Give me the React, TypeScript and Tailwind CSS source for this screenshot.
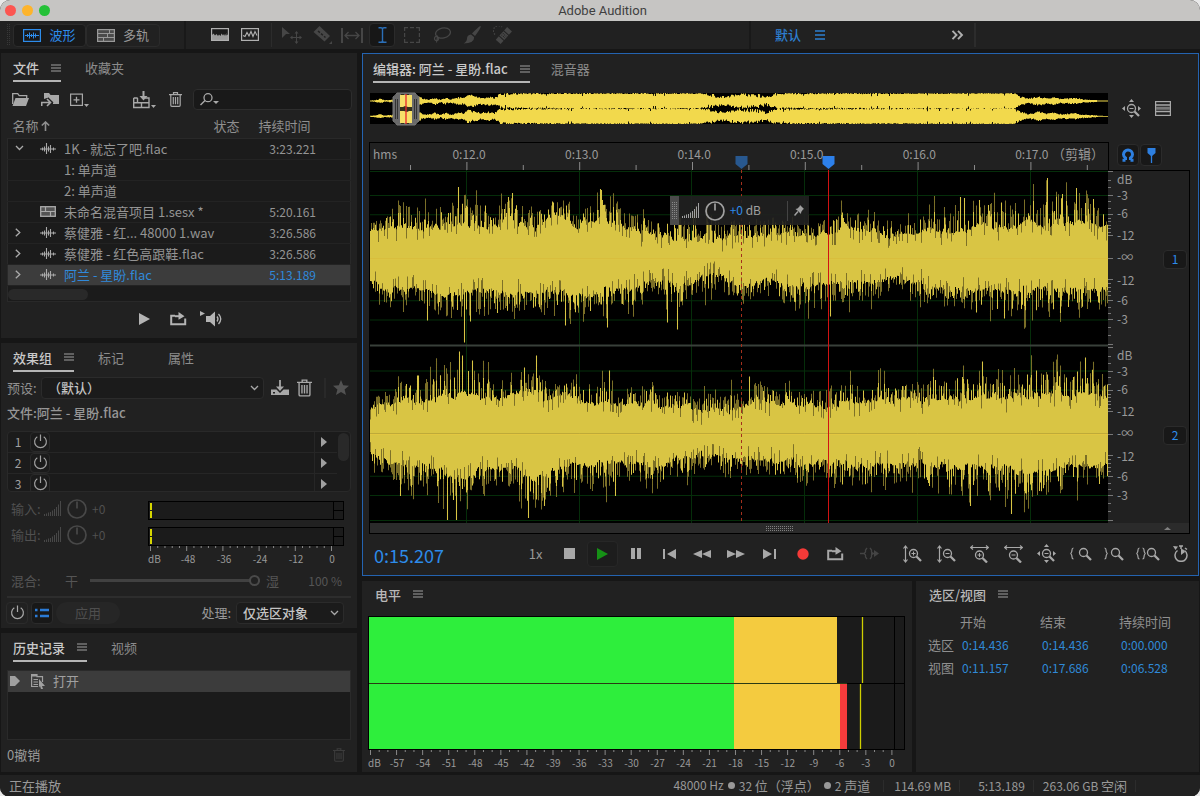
import type { ReactNode } from "react";
import clsx from "clsx";

/* ---------- waveform data ---------- */

type Point = [x: number, base: number, peak: number];
type Spike = [x: number, height: number];

function seeded(seed: number) {
  let a = seed;
  return () => {
    a = (a + 0x6d2b79f5) | 0;
    let t = Math.imul(a ^ (a >>> 15), 1 | a);
    t = (t + Math.imul(t ^ (t >>> 7), 61 | t)) ^ t;
    return ((t ^ (t >>> 14)) >>> 0) / 4294967296;
  };
}

function envelope(points: Point[], x: number): [number, number] {
  for (let i = 1; i < points.length; i++) {
    const a = points[i - 1];
    const b = points[i];
    if (x <= b[0]) {
      const t = (x - a[0]) / (b[0] - a[0]);
      return [a[1] + (b[1] - a[1]) * t, a[2] + (b[2] - a[2]) * t];
    }
  }
  const last = points[points.length - 1];
  return [last[1], last[2]];
}

const WAVE_WIDTH = 738;

function side(center: number, dir: 1 | -1, points: Point[], spikes: Spike[], seed: number) {
  const rnd = seeded(seed);
  let solid = "";
  let dim = "";
  let drift = 0.5;
  for (let x = 0; x < WAVE_WIDTH; x++) {
    const [base, peak] = envelope(points, x);
    const span = peak - base;
    drift = drift * 0.7 + rnd() * 0.3;
    let h = base - 9 + drift * 18 + (rnd() > 0.66 ? rnd() * span * 0.85 : 0);
    let faint = 0;
    if (rnd() < 0.36) faint = h + 4 + rnd() * span * 0.7;
    if (rnd() < 0.2) {
      faint = Math.max(faint, h);
      h -= 5 + rnd() * 8;
    }
    for (const [sx, sh] of spikes) if (sx === x) h = sh;
    const px = x + 0.5;
    solid += `M${px} ${center}V${(center + dir * h).toFixed(1)}`;
    if (faint > h) dim += `M${px} ${(center + dir * h).toFixed(1)}V${(center + dir * faint).toFixed(1)}`;
  }
  return { solid, dim };
}

const waves = [
  side(88, -1, [[0, 27, 32], [20, 30, 48], [35, 33, 62], [60, 30, 50], [92, 37, 72], [120, 32, 56], [140, 38, 62], [165, 30, 45], [185, 42, 58], [205, 34, 50], [230, 40, 62], [250, 30, 46], [275, 28, 40], [290, 22, 42], [320, 20, 45], [350, 20, 40], [400, 24, 40], [440, 24, 34], [458, 24, 40], [475, 30, 50], [500, 27, 46], [530, 22, 30], [550, 30, 45], [580, 26, 60], [600, 30, 62], [640, 32, 60], [665, 35, 64], [690, 34, 68], [720, 35, 68], [738, 33, 50]], [[88, 71], [142, 65], [230, 69], [231, 68], [590, 61], [594, 60], [677, 80], [706, 70]], 11),
  side(88, 1, [[0, 25, 32], [20, 32, 48], [45, 30, 40], [65, 36, 60], [95, 35, 60], [110, 30, 60], [150, 35, 50], [190, 34, 55], [215, 35, 55], [250, 33, 50], [268, 30, 50], [290, 22, 36], [320, 28, 50], [345, 16, 35], [375, 28, 38], [400, 22, 40], [430, 28, 50], [460, 24, 45], [500, 24, 40], [530, 20, 32], [560, 28, 45], [600, 31, 54], [650, 32, 58], [700, 30, 58], [738, 30, 45]], [[57, 62], [94, 84], [100, 63], [195, 67], [237, 69], [297, 64], [307, 71], [460, 58], [634, 60]], 23),
  side(263, -1, [[0, 24, 30], [25, 32, 50], [48, 32, 55], [75, 36, 65], [95, 42, 78], [105, 36, 66], [125, 34, 50], [150, 40, 58], [170, 42, 66], [177, 30, 45], [195, 42, 58], [215, 30, 45], [240, 32, 60], [260, 30, 50], [290, 28, 45], [330, 24, 40], [360, 24, 42], [385, 35, 52], [420, 30, 44], [458, 30, 48], [500, 33, 52], [540, 35, 54], [580, 35, 62], [640, 37, 62], [680, 39, 68], [720, 40, 70], [738, 38, 58]], [[47, 58], [48, 58], [89, 82], [92, 78], [102, 73], [154, 66], [166, 78], [239, 63], [379, 57], [612, 72], [715, 76]], 37),
  side(263, 1, [[0, 20, 28], [20, 30, 50], [45, 33, 62], [60, 30, 50], [80, 42, 80], [95, 45, 70], [115, 34, 60], [145, 34, 50], [160, 45, 80], [180, 38, 64], [200, 30, 50], [240, 28, 56], [265, 30, 50], [290, 28, 45], [330, 20, 40], [365, 24, 40], [400, 28, 44], [450, 28, 48], [500, 33, 56], [550, 31, 50], [600, 33, 58], [660, 36, 64], [700, 33, 60], [738, 33, 52]], [[30, 62], [77, 86], [86, 86], [158, 84], [174, 72], [245, 62], [600, 72], [641, 80]], 53),
];

const overviewPoints: Point[] = [
  [0, 0.5, 0.5], [5, 0.6, 1], [10, 1.5, 2.5], [14, 0.5, 1], [22, 0.8, 1.5], [26, 2, 4], [48, 4, 6], [52, 1.5, 3], [58, 1, 2], [65, 2, 4], [70, 0.8, 1.5],
  [75, 2, 4], [80, 1, 2], [88, 2.5, 4], [94, 2, 4], [97, 5, 7], [104, 4, 6], [110, 2, 4], [118, 3, 5], [124, 2, 4], [130, 5, 8],
  [140, 6, 8], [170, 6.5, 8], [200, 7, 8], [325, 7, 8], [338, 5, 8], [348, 2.5, 6], [354, 2, 5], [368, 5, 8], [378, 4, 8], [390, 3, 7], [396, 2, 5], [405, 5.5, 8], [420, 6.5, 8], [640, 7.3, 8],
  [645, 6.5, 7.5], [650, 3, 5], [658, 1.5, 2.5], [668, 3, 5], [676, 2, 3], [683, 3, 4], [690, 1.5, 2.5], [706, 2, 3.5], [712, 1, 2], [726, 0.7, 1.2], [728, 0.5, 0.5], [738, 0.4, 0.4],
];

function overviewPath(center: number, seed: number) {
  const rnd = seeded(seed);
  let d = "";
  for (let x = 0; x < WAVE_WIDTH; x++) {
    const [base, peak] = envelope(overviewPoints, x);
    const up = base + rnd() * (peak - base);
    const down = base + rnd() * (peak - base);
    const dip = rnd() < 0.03 && base > 4 ? 2 : 0;
    d += `M${x + 0.5} ${(center - up + dip).toFixed(1)}V${(center + down - dip).toFixed(1)}`;
  }
  return d;
}

const overview = overviewPath(8, 5) + overviewPath(23.3, 9);

/* ---------- icons ---------- */

type IconProps = { w: number; h: number; children: ReactNode; className?: string };

function Icon({ w, h, children, className }: IconProps) {
  return (
    <svg width={w} height={h} viewBox={`0 0 ${w} ${h}`} fill="none" stroke="currentColor" className={clsx("shrink-0", className)} aria-hidden="true">
      {children}
    </svg>
  );
}

const Menu = ({ className }: { className?: string }) => (
  <Icon w={10} h={9} className={className}><path d="M0 1h10M0 4h10M0 7h10" /></Icon>
);

const Chevron = ({ className }: { className?: string }) => (
  <Icon w={9} h={6} className={className}><path d="M1 1l3.500 3.500L8 1" strokeWidth="1.300" /></Icon>
);

const WaveGlyph = () => (
  <Icon w={16} h={12}><path d="M0 6h16M2.500 4.500v3M4.500 3.500v5M6.500 0v11M8.500 3.500v5M10.500 2v8M13.500 4.500v3" strokeWidth="1.100" /></Icon>
);

const SessionGlyph = () => (
  <Icon w={16} h={11}><rect x=".7" y=".7" width="14.600" height="9.600" fill="#555" strokeWidth="1.300" /><path d="M1 5.500h14M5.500 1v4.500M10.500 5.500V10" strokeWidth="1.200" /></Icon>
);

const Trash = ({ w = 13, h = 15, className }: { w?: number; h?: number; className?: string }) => (
  <svg width={w} height={h} viewBox="0 0 13 15" fill="none" stroke="currentColor" className={clsx("shrink-0", className)} aria-hidden="true">
    <path d="M0 2.600h13M4.500 2.500V.7h4v1.800M1.800 3v10.300q0 1 1 1h7.400q1 0 1-1V3M4.300 5v7.200M6.500 5v7.200M8.700 5v7.200" strokeWidth="1.200" />
  </svg>
);

const Power = ({ className }: { className?: string }) => (
  <Icon w={15} h={15} className={className}><path d="M4.300 2.700a5.900 5.900 0 1 0 6.400 0M7.500 .5v6.500" strokeWidth="1.200" /></Icon>
);

const Loop = () => (
  <Icon w={17} h={14}><path d="M5 3.800H1.200v8.400h14V6.500" strokeWidth="2" /><path d="M5 4.200h5" strokeWidth="2" /><path d="M8.500 0l6 4.200-6 3.600z" fill="currentColor" stroke="none" /></Icon>
);

const Bars = ({ className }: { className?: string }) => (
  <Icon w={17} h={15} className={className}><path d="M.5 13v2M2.500 12.500V15M4.500 11.500V15M6.500 11V15M8.500 9.500V15M10.500 8V15M12.500 6V15M14.500 3.500V15M16.500 0V15" /></Icon>
);

const Knob = ({ className }: { className?: string }) => (
  <Icon w={20} h={20} className={className}><circle cx="10" cy="10" r="9" strokeWidth="1.700" /><path d="M10 2.500V9.500" strokeWidth="1.700" /></Icon>
);

const Lens = ({ x, y, sign }: { x: number; y: number; sign?: "+" | "-" }) => (
  <g transform={`translate(${x} ${y})`}>
    <circle cx="4.500" cy="4.500" r="4" strokeWidth="1.300" />
    <path d="M7.500 7.500L12 12" strokeWidth="2.300" />
    {sign && <path d={sign === "+" ? "M2.500 4.500h4M4.500 2.500v4" : "M2.500 4.500h4"} />}
  </g>
);

const ZoomV = ({ sign }: { sign: "+" | "-" }) => (
  <Icon w={19} h={18}><path d="M2.500 2v14M.5 3.500l2-2.500 2 2.500M.5 14.500l2 2.500 2-2.500" strokeWidth="1.200" /><Lens x={6} y={4} sign={sign} /></Icon>
);

const ZoomH = ({ sign }: { sign: "+" | "-" }) => (
  <Icon w={19} h={18}><path d="M1 2.500h17M3 .5l-2.500 2 2.500 2M16 .5l2.500 2-2.500 2" strokeWidth="1.200" /><Lens x={5} y={5.5} sign={sign} /></Icon>
);

const ZoomFull = () => (
  <Icon w={19} h={19}>
    <Lens x={5} y={5} sign="-" />
    <path d="M9.500 0l2.500 3H7zM9.500 19l2.500-3H7zM0 9.500L3 7v5zM19 9.500L16 7v5z" fill="currentColor" stroke="none" />
  </Icon>
);

/* ---------- shared pieces ---------- */

type Tab = { label: string; active?: boolean; spaced?: boolean };

function Tabs({ tabs, gap, name }: { tabs: Tab[]; gap: string; name: string }) {
  return (
    <div role="tablist" aria-label={name} className={clsx("flex h-[29px] items-stretch", gap)}>
      {tabs.map((t) => (
        <button
          key={t.label}
          role="tab"
          aria-selected={!!t.active}
          className={clsx(
            "flex items-center gap-3 border-b-2 pt-[3px] whitespace-nowrap",
            t.active ? "border-[#b5b5b5] font-medium text-[#c9c9c9]" : "border-transparent text-[#8c8c8c]",
            t.spaced && "ml-5",
          )}
        >
          {t.label}
          {t.active && <Menu className="text-[#a0a0a0]" />}
        </button>
      ))}
    </div>
  );
}

const toolCell = "flex h-[22px] w-[30px] items-center justify-center";

function TopBar() {
  return (
    <div className="flex h-7 items-center overflow-hidden bg-[#212121] text-[#464646]">
      <Icon w={4} h={22} className="ml-[6px] text-[#383838]"><path d="M1.500 0v22M3.500 0v22" strokeDasharray="1 1" /></Icon>
      <div className="ml-[3px] flex">
        <button className="flex h-[23px] w-[73px] items-center justify-center gap-2 rounded-sm border border-[#2b2b2b] bg-[#191919] text-[#2d8ceb]">
          <Icon w={18} h={13}><rect x=".6" y=".6" width="16.800" height="11.800" strokeWidth="1.200" /><path d="M2 6.500h14M4.500 5v3M6.500 3.500v6M8.500 5v3M10.500 3.500v6M12.500 4.500v4" /></Icon>
          波形
        </button>
        <button className="flex h-[23px] w-[74px] items-center justify-center gap-2 rounded-sm border border-[#2b2b2b] text-[#999]">
          <Icon w={18} h={13}><rect x=".6" y=".6" width="16.800" height="11.800" fill="#4b4b4b" strokeWidth="1.200" /><path d="M1 4.500h16M1 8.500h16M6.500 8.500V12M12.500 1v3.500M10.500 4.500v4" /></Icon>
          多轨
        </button>
      </div>
      <div className="ml-6 h-7 w-[2px] bg-[#191919]" />
      <div className="ml-[25px] flex gap-3 pb-px text-[#b0b0b0]">
        <button aria-label="频谱频率"><Icon w={18} h={13}><rect x=".6" y=".6" width="16.800" height="11.800" fill="#9c9c9c" strokeWidth="1.200" /><path d="M1.200 1.200h15.600v5.300l-1.500 1V5l-1.300 3-1-2-1 1.500-1.500-2-1 2.500L8 6.500 7 8 5.500 6 4 7.500 2.500 5.500 1.200 7z" fill="#1c1c1c" stroke="none" /></Icon></button>
        <button aria-label="频谱音调"><Icon w={18} h={13}><rect x=".6" y=".6" width="16.800" height="11.800" strokeWidth="1.200" /><path d="M2 7.500l2 1 2-4 2 3.500 2-4.500 2 5 2-5 2 4" strokeWidth="1.100" /></Icon></button>
      </div>
      <div className="ml-3 h-6 w-px bg-[#2c2c2c]" />
      <div className="ml-[5px] flex">
        <button aria-label="移动" className={toolCell}><Icon w={20} h={17}><path d="M0 0l8 7H4L0 11z" fill="currentColor" stroke="none" /><path d="M10 10.500h9M14.500 6v9" /><path d="M14.500 4l2 2.500h-4zM14.500 17l2-2.500h-4zM8 10.500l2.500-2v4zM20 10.500l-2.500-2v4z" fill="currentColor" stroke="none" /></Icon></button>
        <button aria-label="切断" className={toolCell}><Icon w={19} h={18}><path d="M.5 6L6.500 0 17 10l-5.500 5.500z" fill="currentColor" stroke="none" /><path d="M5 5l7.500 6.500" stroke="#212121" strokeWidth="1.500" strokeDasharray="2.500 1.500" /><path d="M19 15v3h-3z" fill="currentColor" stroke="none" /></Icon></button>
        <button aria-label="滑动" className={toolCell}><Icon w={22} h={15}><path d="M1 0v15M21 0v15" strokeWidth="2" /><path d="M4 7.500h14M7.500 4L4 7.500 7.500 11M14.500 4L18 7.500 14.500 11" strokeWidth="1.300" /></Icon></button>
        <button aria-label="时间选择" className="mx-[2px] -my-px flex h-[24px] w-[26px] items-center justify-center rounded-sm border border-[#2b2b2b] bg-[#171717] text-[#2b6fb8]"><Icon w={9} h={16}><path d="M.5 .7h2.500q1.500 0 1.500 1.500v11.600q0 1.500-1.500 1.500H.5M8.500 .7H6q-1.500 0-1.500 1.500M8.500 15.300H6q-1.500 0-1.500-1.500" strokeWidth="1.400" /></Icon></button>
        <button aria-label="框选" className={toolCell}><Icon w={16} h={16}><path d="M.6 4V.6H4M12 .6h3.400V4M15.400 12v3.400H12M4 15.400H.6V12M6 .6h4M6 15.400h4M.6 6v4M15.400 6v4" strokeWidth="1.200" /></Icon></button>
        <button aria-label="套索" className={toolCell}><Icon w={18} h={16}><ellipse cx="10" cy="6" rx="7.500" ry="5" transform="rotate(-12 10 6)" strokeWidth="1.300" /><path d="M4.500 9.500q-3-.5-3 2t3 2q2-1 0-4l-1 6" strokeWidth="1.200" /></Icon></button>
        <button aria-label="画笔" className={toolCell}><Icon w={18} h={18}><path d="M17.500 0Q19 1 12 10l-3-2.500Q15 1 17.500 0zM8 8.500L11 11q1 6-10.500 6.500Q4 15.500 4 12.500 4 9 8 8.500z" fill="currentColor" stroke="none" /></Icon></button>
        <button aria-label="修复" className={toolCell}><Icon w={19} h={18}><g transform="rotate(-48 11 9)"><rect x="2" y="6" width="4.500" height="6.500" fill="currentColor" stroke="none" /><rect x="7.500" y="6" width="6" height="6.500" fill="currentColor" stroke="none" /><rect x="14.500" y="6" width="4.500" height="6.500" fill="currentColor" stroke="none" /><path d="M9.500 7v4.500M11.500 7v4.500" stroke="#212121" strokeDasharray="1 1" /></g><path d="M2 8.500A5 5 0 0 1 9 1" strokeDasharray="1.500 1.500" strokeWidth="1.200" /></Icon></button>
      </div>
      <div className="flex-1" />
      <div className="h-7 w-[2px] bg-[#191919]" />
      <button className="ml-6 flex w-[150px] items-center gap-[14px] font-medium text-[#2d7fd0]">
        默认
        <Icon w={10} h={10}><path d="M0 1h10M0 5h10M0 9h10" strokeWidth="1.300" /></Icon>
      </button>
      <button aria-label="更多工作区" className="ml-[26px] text-[#b0b0b0]"><Icon w={13} h={10}><path d="M1.500 .8L5.500 5l-4 4.200M7 .8L11 5 7 9.200" strokeWidth="1.900" /></Icon></button>
      <div className="ml-[10px] h-6 w-[2px] bg-[#2c2c2c]" />
      <div className="w-56" />
    </div>
  );
}

/* ---------- files ---------- */

const files = [
  { name: "1K - 就忘了吧.flac", time: "3:23.221", state: "open", kind: "wave" },
  { name: "1: 单声道", time: "", state: "", kind: "" },
  { name: "2: 单声道", time: "", state: "", kind: "" },
  { name: "未命名混音项目 1.sesx *", time: "5:20.161", state: "", kind: "session" },
  { name: "蔡健雅 - 红... 48000 1.wav", time: "3:26.586", state: "closed", kind: "wave" },
  { name: "蔡健雅 - 红色高跟鞋.flac", time: "3:26.586", state: "closed", kind: "wave" },
  { name: "阿兰 - 星盼.flac", time: "5:13.189", state: "closed", kind: "wave", selected: true },
];

function FilesPanel() {
  return (
    <section className="bg-[#212121]">
      <Tabs name="文件面板" gap="gap-6 pl-3" tabs={[{ label: "文件", active: true }, { label: "收藏夹" }]} />
      <div className="mt-[7px] flex items-center pr-[5px] pl-[11px] text-[#a8a8a8]">
        <button aria-label="打开文件"><Icon w={17} h={13}><path d="M.7 11V.7h5l1.500 2h7.500V5" strokeWidth="1.300" /><path d="M3.500 5H17l-3 8H.5z" fill="currentColor" stroke="none" /></Icon></button>
        <button aria-label="导入文件" className="ml-3"><Icon w={19} h={15}><path d="M3 7V1h5l1.500 2H18v9h-6V6H6z" fill="currentColor" stroke="none" /><path d="M5 5h8v6" fill="currentColor" stroke="none" /><path d="M.7 14V10.500H9M6 6.500l4 4-4 4" stroke="#212121" strokeWidth="3.500" /><path d="M.7 14v-3.500H9M6 7l3.500 3.500L6 14" strokeWidth="1.600" /></Icon></button>
        <button aria-label="新建文件" className="ml-[10px]"><Icon w={20} h={14}><rect x=".6" y="1.100" width="11.800" height="11.300" strokeWidth="1.200" /><path d="M3.500 6.800h6M6.500 3.800v6" strokeWidth="1.300" /><path d="M14 11h5l-2.500 3z" fill="currentColor" stroke="none" /></Icon></button>
        <button aria-label="插入到多轨混音" className="ml-[43px]"><Icon w={23} h={18}><path d="M.7 7h4M12 7h4v9.500H.7V7M.7 11.700H16M8.500 11.700v5M4.500 7v4" strokeWidth="1.400" /><path d="M10.500 0v6" strokeWidth="2" /><path d="M6.500 5h8l-4 4.500z" fill="currentColor" stroke="none" /><path d="M18 14h5l-2.500 3z" fill="currentColor" stroke="none" /></Icon></button>
        <button aria-label="删除文件" className="ml-[13px]"><Trash /></button>
        <label className="ml-[11px] flex h-[21px] min-w-0 flex-1 items-center rounded-sm border border-[#2d2d2d] bg-[#191919] pl-[6px]">
          <Icon w={19} h={13}><circle cx="8" cy="4.700" r="4" strokeWidth="1.300" /><path d="M5 7.500L.5 12" strokeWidth="1.500" /><path d="M13 8h6l-3 3z" fill="currentColor" stroke="none" /></Icon>
          <input aria-label="搜索文件" className="w-full min-w-0 bg-transparent px-1 outline-none" />
        </label>
      </div>
      <table className="mx-[6px] mt-[5px] w-[344px] table-fixed border-collapse text-left">
        <thead className="text-[#8f8f8f]">
          <tr className="h-[23px]">
            <th className="w-[200px] pl-[5px] font-normal">
              <span className="flex items-center gap-[2px]">名称<Icon w={9} h={10}><path d="M4.500 10V1M.8 4.500L4.500 1l3.700 3.500" strokeWidth="1.600" /></Icon></span>
            </th>
            <th className="w-[46px] pl-[6px] font-normal">状态</th>
            <th className="pl-[5px] font-normal">持续时间</th>
          </tr>
        </thead>
        <tbody className="border border-[#292929] bg-[#1b1b1b] text-[#949494]">
          {files.map((f) => (
            <tr key={f.name} className={clsx("h-[21px] border-b border-[#232323]", f.selected && "bg-[#3c3c3c] text-[#3089da]")}>
              <td colSpan={2} className="p-0">
                <div className="flex h-5 items-center whitespace-nowrap">
                  <span className="flex w-[32px] justify-start pb-px pl-[7px] text-[#aaa]">
                    {f.state === "open" && <Chevron />}
                    {f.state === "closed" && <Icon w={6} h={9}><path d="M.8 .8l4 3.700-4 3.700" strokeWidth="1.300" /></Icon>}
                  </span>
                  <span className="w-6 text-[#aaa]">
                    {f.kind === "wave" && <WaveGlyph />}
                    {f.kind === "session" && <SessionGlyph />}
                  </span>
                  {f.name}
                </div>
              </td>
              <td className="p-0 pr-[34px] text-right text-xs leading-5">{f.time}</td>
            </tr>
          ))}
          <tr className="h-4">
            <td colSpan={3} className="p-0"><div className="mt-[3px] h-[11px] w-20 rounded-full bg-[#292929]" /></td>
          </tr>
        </tbody>
      </table>
      <div className="flex h-[36px] items-center pb-[2px] pl-[138px] text-[#b4b4b4]">
        <button aria-label="播放"><Icon w={11} h={12}><path d="M0 0l11 6L0 12z" fill="currentColor" stroke="none" /></Icon></button>
        <button aria-label="循环播放" className="ml-5"><Loop /></button>
        <button aria-label="自动播放" className="ml-[13px]"><Icon w={24} h={16}><path d="M0 0l5 2.500L0 5zM6 5h4l5-4.500v15L10 11H6z" fill="currentColor" stroke="none" /><path d="M17 5.500q2 2.500 0 5M18.500 3q4.500 5 0 10" strokeWidth="1.300" /></Icon></button>
      </div>
    </section>
  );
}

/* ---------- effects rack ---------- */

function MiniMeter() {
  return (
    <div className="grid h-[19px] grid-cols-[1fr_10px] border-[1px] border-black bg-[#1b1b1b]">
      <div className="flex flex-col gap-px py-px pl-px"><div className="w-[2px] flex-1 bg-[#d6d600]" /><div className="w-[2px] flex-1 bg-[#d6d600]" /></div>
      <div className="flex flex-col border-l border-black"><div className="flex-1 border-b border-black" /><div className="flex-1" /></div>
    </div>
  );
}

function GainRow({ label }: { label: string }) {
  return (
    <div className="flex h-[26px] items-center text-[#505050]">
      <span className="w-[33px]">{label}</span>
      <Bars className="text-[#484848]" />
      <Knob className="ml-[6px] text-[#484848]" />
      <span className="ml-[5px] text-xs leading-5">+0</span>
    </div>
  );
}

function EffectsPanel() {
  return (
    <section className="bg-[#212121]">
      <Tabs name="效果面板" gap="gap-6 pl-3" tabs={[{ label: "效果组", active: true }, { label: "标记" }, { label: "属性", spaced: true }]} />
      <div className="mt-[5px] flex items-center pr-2 pl-[6px] text-[#a8a8a8]">
        <label htmlFor="preset" className="w-[34px] text-[#909090]">预设:</label>
        <div className="grid w-[224px] items-center">
          <select id="preset" className="col-start-1 row-start-1 h-[22px] appearance-none rounded-sm border border-[#2b2b2b] bg-[#1b1b1b] pl-[6px] font-medium text-[#c4c4c4]">
            <option>（默认）</option>
          </select>
          <Chevron className="pointer-events-none col-start-1 row-start-1 mr-[5px] justify-self-end" />
        </div>
        <button aria-label="保存预设" className="ml-[7px]"><Icon w={18} h={15}><path d="M0 9.500h5.500L9 13l3.500-3.500H18V15H0z" fill="currentColor" stroke="none" /><path d="M9 0v8" strokeWidth="1.800" /><path d="M5 6.500h8L9 11z" fill="currentColor" stroke="none" /><rect x="2" y="12" width="2" height="1.500" fill="#212121" stroke="none" /></Icon></button>
        <button aria-label="删除预设" className="ml-2"><Trash w={15} h={18} /></button>
        <div className="ml-3 h-5 w-[2px] bg-[#292929]" />
        <button aria-label="收藏" className="ml-[7px] text-[#525252]"><Icon w={16} h={15}><path d="M8 0l2.200 5.300L16 5.800l-4.400 3.700 1.400 5.500-5-3-5 3 1.400-5.500L0 5.800l5.800-.5z" fill="currentColor" stroke="none" /></Icon></button>
      </div>
      <div className="mt-1 pl-[6px] font-medium leading-5 text-[#969696]">文件:阿兰 - 星盼.flac</div>
      <div className="mx-[6px] mt-[8px] flex h-[61px] overflow-hidden rounded-sm border border-[#292929] bg-[#1b1b1b]">
        <div className="flex-1">
          {[1, 2, 3].map((n) => (
            <div key={n} className="flex h-[21px] items-center border-b border-[#262626] text-[#a0a0a0]">
              <span className="w-5 text-center text-xs">{n}</span>
              <button aria-label={`启用效果 ${n}`} className="ml-[2px] flex h-5 w-5 items-center justify-center rounded-sm border border-[#2a2a2a]"><Power /></button>
              <button aria-label={`选择效果 ${n}`} className="ml-auto flex h-full w-[23px] items-center border-l border-[#262626] pl-[6px]"><Icon w={6} h={10}><path d="M0 0l6 5-6 5z" fill="currentColor" stroke="none" /></Icon></button>
            </div>
          ))}
        </div>
        <div className="mx-[1px] mt-px h-[28px] w-[11px] rounded-full bg-[#292929]" />
      </div>
      <div className="mt-1 grid grid-cols-[137px_196px] pl-[10px]">
        <div><GainRow label="输入:" /><GainRow label="输出:" /></div>
        <div className="mt-[5px]">
          <MiniMeter />
          <div className="h-[7px]" />
          <MiniMeter />
          <svg viewBox="0 0 196 5" preserveAspectRatio="none" className="h-[5px] w-full" stroke="#8a8a8a" aria-hidden="true">
            {Array.from({ length: 26 }, (_, i) => <path key={i} d={`M${2.5 + i * 7.24} 0v${i % 5 === 0 ? 5 : 2}`} />)}
          </svg>
          <div className="-mr-[6px] flex text-[10px] leading-4 text-[#999]">
            <span className="w-[22px]">dB</span>
            {["-48", "-36", "-24", "-12", "0"].map((v) => <span key={v} className="flex-1 text-center">{v}</span>)}
          </div>
        </div>
      </div>
      <div className="mt-1 flex h-5 items-center pl-[10px] text-[#555]">
        <span className="w-[54px]">混合:</span>
        <label htmlFor="mix">干</label>
        <input
          id="mix"
          type="range"
          defaultValue={100}
          className="ml-3 h-3 w-[170px] appearance-none bg-transparent [&::-webkit-slider-runnable-track]:h-[3px] [&::-webkit-slider-runnable-track]:bg-[#414141] [&::-webkit-slider-thumb]:-mt-1 [&::-webkit-slider-thumb]:h-[11px] [&::-webkit-slider-thumb]:w-[11px] [&::-webkit-slider-thumb]:appearance-none [&::-webkit-slider-thumb]:rounded-full [&::-webkit-slider-thumb]:border-2 [&::-webkit-slider-thumb]:border-[#4a4a4a] [&::-webkit-slider-thumb]:bg-[#212121]"
        />
        <span className="ml-[6px]">湿</span>
        <span className="ml-auto pr-[15px] text-xs">100 %</span>
      </div>
      <div className="mx-[6px] mt-[5px] h-[2px] bg-[#2d2d2d]" />
      <div className="flex h-[30px] items-center pr-[13px] pl-[5px]">
        <button aria-label="效果组开关" className="flex h-[22px] w-[22px] items-center justify-center rounded-sm border border-[#2b2b2b] text-[#a8a8a8]"><Power /></button>
        <button aria-label="列表" className="ml-[3px] flex h-[22px] w-[22px] items-center justify-center rounded-sm border border-[#2b2b2b] bg-[#181818] text-[#2b7bd6]"><Icon w={14} h={10}><path d="M0 2h2.500M5 2h9M0 8h2.500M5 8h9" strokeWidth="2.500" /></Icon></button>
        <button className="ml-[3px] h-[22px] w-[64px] rounded-full bg-[#262626] text-[#4e4e4e]">应用</button>
        <label htmlFor="process" className="mr-[5px] ml-auto text-[#999]">处理:</label>
        <div className="grid w-[108px] items-center">
          <select id="process" className="col-start-1 row-start-1 h-[22px] appearance-none rounded-sm border border-[#2b2b2b] bg-[#1b1b1b] pl-[6px] font-medium text-[#c4c4c4]">
            <option>仅选区对象</option>
          </select>
          <Chevron className="pointer-events-none col-start-1 row-start-1 mr-[5px] justify-self-end text-[#a8a8a8]" />
        </div>
      </div>
    </section>
  );
}

/* ---------- history ---------- */

function HistoryPanel() {
  return (
    <section className="flex flex-1 flex-col bg-[#212121]">
      <Tabs name="历史面板" gap="gap-6 pl-3" tabs={[{ label: "历史记录", active: true }, { label: "视频" }]} />
      <div className="mx-[6px] mt-[8px] min-h-[68px] flex-1 border border-[#2a2a2a] bg-[#1b1b1b]">
        <div className="flex h-[21px] items-center bg-[#3c3c3c] pl-[2px] text-[#a0a0a0]">
          <Icon w={10} h={10}><path d="M0 0h5l5 5-5 5H0z" fill="currentColor" stroke="none" /></Icon>
          <Icon w={14} h={15} className="ml-[11px]"><path d="M.6 13V.6H6v2h5.500V8M.6 12.500h6.500" strokeWidth="1.200" /><path d="M.6 .6H6v2H.6zM8 5l6 7h-3l1 3H10l-1-3-1 1.500z" fill="currentColor" stroke="none" /><path d="M2.500 5.500H7M2.500 8H7M2.500 10.500H7" /></Icon>
          <span className="ml-[8px]">打开</span>
        </div>
      </div>
      <div className="flex h-[32px] items-center justify-between pr-3 pb-[2px] pl-[6px] text-[#999]">
        <span>0撤销</span>
        <button aria-label="删除历史记录" className="text-[#3c3c3c]"><Trash w={12} h={14} /></button>
      </div>
    </section>
  );
}

/* ---------- editor ---------- */

const seconds = ["0:12.0", "0:13.0", "0:14.0", "0:15.0", "0:16.0", "0:17.0"];

const Marker = () => <Icon w={13} h={13}><path d="M.5 0h12v8l-6 5-6-5z" fill="currentColor" stroke="none" /></Icon>;

const scaleRows: [string, string][] = [
  ["dB", "flex-[16]"], ["-3", "flex-[16]"], ["-6", "flex-[20]"], ["-12", "flex-[23]"],
  ["-∞", "flex-[22]"], ["-12", "flex-[22]"], ["-6", "flex-[19]"], ["-3", "flex-[19]"],
];

function ChannelScale({ channel }: { channel: number }) {
  return (
    <div className="flex min-h-0 flex-1">
      <svg viewBox="0 0 6 176" preserveAspectRatio="none" className="h-full w-[6px]" stroke="#777" aria-hidden="true">
        <path d="M0 .5h5M0 24.500h5M0 43.500h5M0 64.500h5M0 87.500h5M0 108.500h5M0 129.500h5M0 148.500h5M0 173.500h5" />
        <path d="M0 9.500h3M0 16.500h3M0 30.500h3M0 37.500h3M0 47.500h3M0 50.500h3M0 54.500h3M0 57.500h3M0 61.500h3M0 112.500h3M0 116.500h3M0 120.500h3M0 124.500h3M0 136.500h3M0 142.500h3M0 156.500h3M0 164.500h3" />
      </svg>
      <div className="flex w-[40px] flex-col pl-[3px] text-xs leading-none text-[#999]">
        {scaleRows.map(([v, grow], i) => <span key={i} className={clsx("flex min-h-0 items-center", grow)}>{v}</span>)}
        <span className="flex-[18]" />
      </div>
      <div className="ml-auto flex items-center pr-[2px]">
        <button aria-label={`声道 ${channel}`} className="flex h-[19px] w-[24px] items-center justify-center rounded-sm border border-[#2b2b2b] bg-[#181818] text-xs text-[#2d8ceb]">{channel}</button>
      </div>
    </div>
  );
}

const cell = "flex h-[26px] items-center justify-center";

function Transport() {
  return (
    <div className="flex h-[41px] items-center pb-[2px] text-[#a8a8a8]">
      <output className="w-[156px] shrink-0 pt-[2px] pl-[11px] text-lg leading-6 text-[#2d8ceb]">0:15.207</output>
      <div className="grid w-[367px] shrink-0 grid-cols-11 items-center">
        <span className={clsx(cell, "text-[#999]")}>1x</span>
        <button aria-label="停止" className={cell}><Icon w={11} h={11}><path d="M0 0h11v11H0z" fill="currentColor" stroke="none" /></Icon></button>
        <button aria-label="播放" className={clsx(cell, "mx-px rounded-sm border border-[#272727] bg-[#1d1d1d] text-[#169116]")}><Icon w={11} h={12}><path d="M0 0l11 6L0 12z" fill="currentColor" stroke="none" /></Icon></button>
        <button aria-label="暂停" className={cell}><Icon w={10} h={11}><path d="M0 0h4v11H0zM6 0h4v11H6z" fill="currentColor" stroke="none" /></Icon></button>
        <button aria-label="上一个" className={cell}><Icon w={13} h={10}><path d="M0 0h2v10H0zM13 0v10L4 5z" fill="currentColor" stroke="none" /></Icon></button>
        <button aria-label="快退" className={cell}><Icon w={18} h={8}><path d="M9 0v8L0 4zM18 0v8L9 4z" fill="currentColor" stroke="none" /></Icon></button>
        <button aria-label="快进" className={cell}><Icon w={18} h={8}><path d="M0 0v8l9-4zM9 0v8l9-4z" fill="currentColor" stroke="none" /></Icon></button>
        <button aria-label="下一个" className={cell}><Icon w={13} h={10}><path d="M11 0h2v10h-2zM0 0v10l9-5z" fill="currentColor" stroke="none" /></Icon></button>
        <button aria-label="录制" className={clsx(cell, "text-[#f53a38]")}><Icon w={12} h={12}><circle cx="6" cy="6" r="5.700" fill="currentColor" stroke="none" /></Icon></button>
        <button aria-label="循环" className={cell}><Loop /></button>
        <button aria-label="跳过所选项目" className={clsx(cell, "text-[#444]")}><Icon w={19} h={13}><path d="M0 6.500h4M11 6.500h5M7 1L5.500 3v2L4 6.500 5.500 8v2L7 12M10 1l1.500 2v2L13 6.500 11.500 8v2L10 12" strokeWidth="1.300" /><path d="M14 3l5 3.500-5 3.500z" fill="currentColor" stroke="none" /></Icon></button>
      </div>
      <div className="ml-auto grid w-[302px] shrink-0 grid-cols-9 items-center">
        <button aria-label="放大振幅" className={cell}><ZoomV sign="+" /></button>
        <button aria-label="缩小振幅" className={cell}><ZoomV sign="-" /></button>
        <button aria-label="放大时间" className={cell}><ZoomH sign="+" /></button>
        <button aria-label="缩小时间" className={cell}><ZoomH sign="-" /></button>
        <button aria-label="全部缩小" className={cell}><ZoomFull /></button>
        <button aria-label="放大入点" className={cell}><Icon w={22} h={15}><path d="M3.500 2q-1.500 0-1.500 2T.8 7.500Q2 9 2 11t1.500 2" strokeWidth="1.200" /><Lens x={9} y={2} /></Icon></button>
        <button aria-label="放大出点" className={cell}><Icon w={20} h={15}><path d="M.5 2Q2 2 2 4t1.200 3.500Q2 9 2 11T.5 13" strokeWidth="1.200" /><Lens x={7} y={2} /></Icon></button>
        <button aria-label="缩放至选区" className={cell}><Icon w={24} h={15}><path d="M3.500 2q-1.500 0-1.500 2T.8 7.500Q2 9 2 11t1.500 2M6.500 2Q8 2 8 4t1.200 3.500Q8 9 8 11t-1.500 2" strokeWidth="1.200" /><Lens x={11} y={2} /></Icon></button>
        <button aria-label="时间缩放" className={cell}><Icon w={16} h={17}><path d="M4.500 5.500a6 6 0 1 0 7 0M8 1v3M6 1h4" strokeWidth="1.500" /><path d="M8 10V4q3 0 4 3zM0 1l5 .5-2.500 3.500z" fill="currentColor" stroke="none" /><path d="M12 3l2 1.500" strokeWidth="1.500" /></Icon></button>
      </div>
    </div>
  );
}

function EditorPanel() {
  return (
    <section className="flex flex-1 flex-col border border-[#2463b0] bg-[#212121]">
      <Tabs name="编辑器面板" gap="gap-[21px] pl-[10px]" tabs={[{ label: "编辑器: 阿兰 - 星盼.flac", active: true }, { label: "混音器" }]} />
      <div className="mt-[10px] flex items-center pl-[7px]">
        <div className="relative h-[31px] min-w-0 flex-1 bg-black">
          <svg viewBox="0 0 738 31" preserveAspectRatio="none" className="h-full w-full" aria-hidden="true">
            <path d={overview} stroke="#f2d94c" strokeWidth="1.100" />
          </svg>
          <svg width="28" height="34" viewBox="0 0 28 34" className="absolute -top-px left-[3%]" aria-hidden="true">
            <path d="M5 1h18q2 3 4 4v24q-2 1-4 4H5q-2-3-4-4V5q2-1 4-4z" fill="#6a6a6a" stroke="#787878" />
            <path d="M8 3h12v28H8z" fill="#f6e06a" />
            <path d="M8 15h3l2-1 3 1h4v4h-3l-2 1-3-1H8z" fill="#33301c" />
            <path d="M9 2.500h10M9 31.500h10" stroke="#33301c" strokeDasharray="3 2" />
            <path d="M14 2v30" stroke="#e8262a" strokeWidth="1.300" />
            <path d="M3.500 7v20M5.500 7v20M22.500 7v20M24.500 7v20" stroke="#333" />
          </svg>
        </div>
        <div className="flex w-[90px] items-center gap-[14px] pl-[14px] text-[#a8a8a8]">
          <button aria-label="全部缩小"><ZoomFull /></button>
          <button aria-label="显示布局"><Icon w={16} h={15}><rect x=".6" y=".6" width="14.800" height="13.800" strokeWidth="1.200" /><path d="M1 4h14M1 10.500h14" strokeWidth="1.300" /><path d="M1 7.200h14" strokeWidth="3" stroke="#777" /></Icon></button>
        </div>
      </div>
      <div className="mt-[18px] flex flex-1 flex-col">
        <div className="flex h-7 items-center pl-[6px]">
          <div className="relative h-full min-w-0 flex-1 border border-b-0 border-black">
            <div className="flex h-[22px] items-center text-xs whitespace-nowrap text-[#999]">
              <span className="min-w-0 flex-[40] pl-[3px]">hms</span>
              {seconds.map((s) => <span key={s} className="min-w-0 flex-[113] text-center">{s}</span>)}
              <span className="min-w-0 flex-[20]" />
            </div>
            <span className="absolute top-0 right-1 text-[13px] leading-[22px] text-[#999]">（剪辑）</span>
            <svg viewBox="0 0 738 8" preserveAspectRatio="none" className="absolute bottom-0 left-0 h-2 w-full" stroke="#8a8a8a" aria-hidden="true">
              {Array.from({ length: 13 }, (_, i) => <path key={i} d={`M${40.5 + i * 56.4} ${i % 2 ? 0 : 3}V8`} />)}
            </svg>
            <div className="absolute bottom-[1px] left-[50.300%] -ml-[6px] text-[#28588f]"><Marker /></div>
            <div className="absolute bottom-[1px] left-[62.100%] -ml-[6px] text-[#2d80ea]"><Marker /></div>
          </div>
          <div className="flex w-[89px] gap-px pb-[2px] pl-2 text-[#2d7fe0]">
            <button aria-label="对齐" className="flex h-[22px] w-[22px] items-center justify-center rounded-sm border border-[#2b2b2b] bg-[#181818]"><Icon w={14} h={14}><path d="M4.500 12.200H1.500M9.500 12.200h3M4.500 12V10Q2.500 8.500 2.500 6.500a4.500 4.500 0 0 1 9 0Q11.500 8.500 9.500 10v2" strokeWidth="3" /></Icon></button>
            <button aria-label="标记" className="flex h-[22px] w-[22px] items-center justify-center rounded-sm border border-[#2b2b2b] bg-[#181818]"><Icon w={9} h={15}><path d="M.5 0h8v5l-4 3.500L.5 5z" fill="currentColor" stroke="none" /><path d="M4.500 7v8" strokeWidth="1.300" /></Icon></button>
          </div>
        </div>
        <div className="mr-2 ml-[6px] flex min-h-[352px] flex-1 border-r border-l border-black">
          <div className="relative min-w-0 flex-1 bg-black">
            <svg viewBox="0 0 738 352" preserveAspectRatio="none" className="absolute inset-0 h-full w-full" aria-hidden="true">
              <g stroke="#052e0a">
                <path d="M0 1.500h738M0 25.500h738M0 44.500h738M0 130.500h738M0 149.500h738M0 200.500h738M0 219.500h738M0 305.500h738M0 324.500h738M0 349.500h738" />
                <path d="M96.500 0v352M209.500 0v352M321.500 0v352M434.500 0v352M547.500 0v352M660.500 0v352" />
              </g>
              {waves.map((w, i) => (
                <g key={i} strokeWidth="1.050">
                  <path d={w.dim} stroke="#7a6e27" />
                  <path d={w.solid} stroke="#d9c544" />
                </g>
              ))}
              <path d="M0 88.500h738M0 263.500h738" stroke="#e6c840" />
              <path d="M0 175h738" stroke="#39403a" strokeWidth="2" />
            </svg>
            <div className="absolute inset-y-0 left-[50.300%] w-px bg-[repeating-linear-gradient(to_bottom,#a3301c_0_3px,transparent_3px_6px)]" />
            <div className="absolute inset-y-0 left-[62.100%] w-px bg-[#d11212]" />
            <div className="absolute top-[26px] left-[40.600%] flex h-[29px] w-[139px] items-center bg-[#212121]/90 text-[#a0a0a0]">
              <div className="flex h-full w-[9px] items-center justify-center bg-[#4b4b4b]"><Icon w={5} h={18} className="text-[#888]"><path d="M.5 0v18M2.500 0v18M4.500 0v18" strokeDasharray="1 1" /></Icon></div>
              <Bars className="ml-[3px]" />
              <Knob className="ml-[6px]" />
              <span className="ml-[5px] pb-px text-xs whitespace-nowrap"><span className="text-[#2d8ceb]">+0</span> dB</span>
              <div className="ml-auto h-5 w-px bg-[#444]" />
              <button aria-label="固定" className="mr-[5px] ml-[6px]"><Icon w={10} h={11}><path d="M6 0l4 4-1 .5-1.800 2.500L7 9 4 6 1.500 4 3.500 3.500 5.500 1.500z" fill="currentColor" stroke="none" /><path d="M4 6.500L.5 10.500" strokeWidth="1.500" /></Icon></button>
            </div>
          </div>
          <div className="flex w-[81px] flex-col border-t border-black">
            <ChannelScale channel={1} />
            <ChannelScale channel={2} />
          </div>
        </div>
        <div className="mr-2 ml-[6px] flex h-[11px] items-center border-x border-b border-black bg-[#2b2b2b] text-[#808080]">
          <div className="flex-1" />
          <Icon w={27} h={5}><path d="M0 .5h27M0 2.500h27M0 4.500h27" strokeDasharray="1 1" /></Icon>
          <div className="flex-1 text-right"><Icon w={7} h={3} className="mr-[18px] ml-auto"><path d="M0 3l3.500-3L7 3z" fill="currentColor" stroke="none" /></Icon></div>
        </div>
      </div>
      <Transport />
    </section>
  );
}

/* ---------- levels and selection ---------- */

function LevelsPanel() {
  const marks = Array.from({ length: 20 }, (_, i) => (i === 19 ? "0" : String(-57 + i * 3)));
  return (
    <section className="flex min-w-0 flex-1 flex-col bg-[#212121] pr-[7px] pl-[6px]">
      <h2 className="flex h-[35px] items-center gap-3 pb-2 pl-[7px] font-medium text-[#b8b8b8]">电平<Menu className="text-[#a0a0a0]" /></h2>
      <div className="grid h-[134px] grid-cols-[1fr_10px] border border-black bg-[#1b1b1b]">
        <svg viewBox="0 0 525 132" preserveAspectRatio="none" className="h-[132px] w-full" aria-hidden="true">
          <path d="M0 0h366v132H0z" fill="#2eee3c" />
          <path d="M365 0h103v66H365zM365 67h106v65H365z" fill="#f4cb3f" />
          <path d="M471 67h7v65h-7z" fill="#f53c3c" />
          <path d="M493.500 0v66M491.500 67v65" stroke="#cfcf00" strokeWidth="1.300" />
          <path d="M0 66.500h478" stroke="#2a3a14" />
          <path d="M478 66.500h47" stroke="#000" />
        </svg>
        <div className="flex flex-col border-l border-black"><div className="flex-1 border-b border-black" /><div className="flex-1" /></div>
      </div>
      <svg viewBox="0 0 537 5" preserveAspectRatio="none" className="h-[5px] w-full" stroke="#888" aria-hidden="true">
        {Array.from({ length: 61 }, (_, i) => <path key={i} d={`M${2.5 + i * 8.69} 0v${i % 3 === 0 ? 5 : 2}`} />)}
      </svg>
      <div className="flex text-[10px] leading-4 text-[#999]">
        <span className="w-[16px] shrink-0">dB</span>
        {marks.map((m) => <span key={m} className="min-w-0 flex-1 text-center">{m}</span>)}
      </div>
    </section>
  );
}

function SelectionPanel() {
  const rows = [["选区", "0:14.436", "0:14.436", "0:00.000"], ["视图", "0:11.157", "0:17.686", "0:06.528"]];
  return (
    <section className="w-[283px] shrink-0 bg-[#212121] pl-3 text-[#8f8f8f]">
      <h2 className="flex h-[30px] items-center gap-3 pb-[3px] pl-px font-medium text-[#b8b8b8]">选区/视图<Menu className="text-[#a0a0a0]" /></h2>
      <table className="w-full table-fixed text-left">
        <thead>
          <tr className="h-[22px]">
            <th className="w-[32px]" />
            <th className="w-[80px] font-normal">开始</th>
            <th className="w-[79px] font-normal">结束</th>
            <th className="font-normal">持续时间</th>
          </tr>
        </thead>
        <tbody>
          {rows.map(([name, ...times]) => (
            <tr key={name} className="h-[23px]">
              <th className="font-normal">{name}</th>
              {times.map((t, i) => <td key={i} className="p-0 pl-[2px] text-xs text-[#2f8ad8]">{t}</td>)}
            </tr>
          ))}
        </tbody>
      </table>
    </section>
  );
}

export default function App() {
  return (
    <div className="bg-[#e9e9e9] font-['Noto_Sans_CJK_SC',sans-serif] text-[13px] leading-5">
      <div className="flex min-h-screen flex-col overflow-hidden rounded-[10px] bg-[#161616]">
        <header className="flex h-[21px] items-center bg-[#c6c5c3]">
          <div className="flex flex-1 gap-[6px] pl-[5px]">
            <span className="h-[11px] w-[11px] rounded-full bg-[#fc5651]" />
            <span className="h-[11px] w-[11px] rounded-full bg-[#fdb42c]" />
            <span className="h-[11px] w-[11px] rounded-full bg-[#25c138]" />
          </div>
          <h1 className="font-[Roboto,sans-serif] text-[#3f3f3f]">Adobe Audition</h1>
          <div className="flex-1" />
        </header>
        <TopBar />
        <main className="mt-1 flex flex-1 gap-[5px] pr-px pl-px">
          <div className="flex w-[356px] shrink-0 flex-col gap-[5px]">
            <FilesPanel />
            <EffectsPanel />
            <HistoryPanel />
          </div>
          <div className="flex min-w-0 flex-1 flex-col gap-[5px]">
            <EditorPanel />
            <div className="flex min-h-[191px] gap-[4px]">
              <LevelsPanel />
              <SelectionPanel />
            </div>
          </div>
        </main>
        <footer className="mt-[3px] flex h-[22px] items-center bg-[#212121] pb-px pl-[9px] text-[#999]">
          <span className="flex-1">正在播放</span>
          <span className="flex items-center gap-1 text-xs">
            48000 Hz
            <span className="h-[7px] w-[7px] rounded-full bg-[#999]" />
            <span>32 <span className="text-[13px]">位（浮点）</span></span>
            <span className="h-[7px] w-[7px] rounded-full bg-[#999]" />
            <span>2 <span className="text-[13px]">声道</span></span>
          </span>
          <span className="ml-[13px] border-l border-[#2c2c2c] pl-[10px] text-xs leading-3">114.69 MB</span>
          <span className="ml-2 border-l border-[#2c2c2c] pl-[18px] text-xs leading-3">5:13.189</span>
          <span className="ml-2 border-l border-[#2c2c2c] pl-[9px] text-xs leading-3">263.06 GB <span className="text-[13px]">空闲</span></span>
          <span className="mr-[64px] ml-2 h-3 w-px bg-[#2c2c2c]" />
        </footer>
      </div>
    </div>
  );
}
